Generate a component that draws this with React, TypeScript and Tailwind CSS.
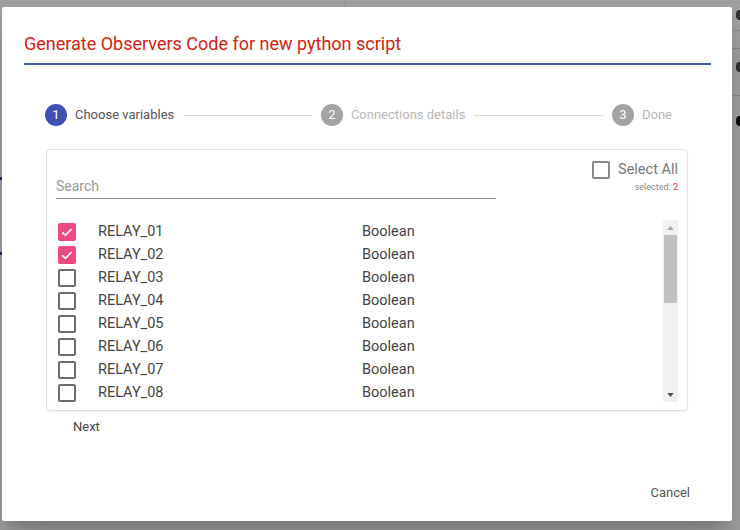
import React from "react";

const relays = Array.from({ length: 8 }, (_, i) => ({
  name: `RELAY_${String(i + 1).padStart(2, "0")}`,
  type: "Boolean",
  checked: i < 2,
}));

function Box({ checked }: { checked: boolean }) {
  if (checked) {
    return (
      <span className="flex h-[18px] w-[18px] shrink-0 items-center justify-center rounded-[2px] bg-[#ee4a80]">
        <svg viewBox="0 0 24 24" className="h-[16px] w-[16px]" fill="none">
          <path d="M5 12.5l4.5 4.5L19 7.5" stroke="#fff" strokeWidth="2.4" />
        </svg>
      </span>
    );
  }
  return <span className="h-[18px] w-[18px] shrink-0 rounded-[2px] border-2 border-[#6e6e6e]" />;
}

function Step({ n, label, active }: { n: number; label: string; active?: boolean }) {
  return (
    <div className="flex items-center gap-[8px]">
      <span
        className={`flex h-[22px] w-[22px] items-center justify-center rounded-full text-[13px] text-white ${
          active ? "bg-[#3f4fb3]" : "bg-[#a3a3a3]"
        }`}
      >
        {n}
      </span>
      <span className={`text-[13px] ${active ? "text-[#555]" : "text-[#b8b8b8]"}`}>{label}</span>
    </div>
  );
}

export default function App() {
  return (
    <div
      className="relative h-[530px] w-[740px] overflow-hidden bg-[#a1a1a1]"
      style={{ fontFamily: "Roboto, 'Liberation Sans', sans-serif" }}
    >
      {/* page behind the overlay */}
      <div className="absolute left-[345px] top-0 h-[7px] w-px bg-[#8e8e8e]" />
      <div className="absolute left-0 top-[2px] h-px w-[740px] bg-[#999]" />
      <div className="absolute left-[733px] top-[30px] h-px w-[7px] bg-[#8a8a8a]" />
      <div className="absolute left-[733px] top-[48px] h-px w-[7px] bg-[#8a8a8a]" />
      <div className="absolute left-[733px] top-[95px] h-px w-[7px] bg-[#8a8a8a]" />
      <div className="absolute left-[736px] top-[10px] h-[10px] w-[4px] rounded-l-full bg-[#333]" />
      <div className="absolute left-[736px] top-[62px] h-[10px] w-[4px] rounded-l-full bg-[#333]" />
      <div className="absolute left-[736px] top-[116px] h-[10px] w-[4px] rounded-l-full bg-[#111]" />
      <div className="absolute left-0 top-[177px] h-[3px] w-[2px] bg-[#1a2a7a]" />
      <div className="absolute left-0 top-[252px] h-[3px] w-[2px] bg-[#1a2a7a]" />

      {/* dialog */}
      <div className="absolute left-[2px] top-[7px] flex h-[514px] w-[730px] flex-col rounded-[2px] bg-white shadow-[0_11px_15px_-7px_rgba(0,0,0,0.2),0_24px_38px_3px_rgba(0,0,0,0.14)]">
        <div className="mx-[22px] mr-[21px] border-b-2 border-[#3d5aa8] pb-[8px] pt-[25px]">
          <h2 className="text-[18px] leading-[23px] text-[#d2220f]">
            Generate Observers Code for new python script
          </h2>
        </div>

        <div className="ml-[43px] mt-[39px] flex w-[627px] items-center">
          <Step n={1} label="Choose variables" active />
          <div className="mx-[9px] h-px flex-1 bg-[#dcdcdc]" />
          <Step n={2} label="Connections details" />
          <div className="mx-[9px] h-px flex-1 bg-[#dcdcdc]" />
          <Step n={3} label="Done" />
        </div>

        <div className="ml-[44px] mt-[23px] w-[642px] rounded-[4px] border border-[#e2e2e2] px-[9px] pb-[8px] pt-[11px] shadow-[0_1px_2px_rgba(0,0,0,0.06)]">
          <div className="flex h-[59px] items-start justify-between">
            <div className="w-[440px] pt-[14px]">
              <div className="flex h-[24px] items-center border-b border-[#8c8c8c] text-[14px] text-[#9a9a9a]">
                Search
              </div>
            </div>
            <div className="flex flex-col items-end">
              <div className="flex h-[18px] items-center gap-[8px]">
                <span className="h-[18px] w-[18px] rounded-[2px] border-2 border-[#8a8a8a]" />
                <span className="text-[14.5px] text-[#777]">Select All</span>
              </div>
              <div className="mt-[2px] text-[9px] leading-[12px] text-[#888]">
                selected: <span className="text-[#e53935]">2</span>
              </div>
            </div>
          </div>

          <div className="flex h-[182px]">
            <div className="flex-1">
              {relays.map((r) => (
                <div key={r.name} className="flex h-[23px] items-center text-[14.5px] text-[#444]">
                  <span className="ml-[2px] mr-[22px] flex">
                    <Box checked={r.checked} />
                  </span>
                  <span className="w-[264px]">{r.name}</span>
                  <span>{r.type}</span>
                </div>
              ))}
            </div>
            <div className="flex w-[15px] flex-col bg-[#f1f1f1]">
              <div className="flex h-[15px] items-center justify-center">
                <svg viewBox="0 0 8 5" className="h-[4px] w-[7px]">
                  <path d="M0 5L4 0L8 5Z" fill="#a3a3a3" />
                </svg>
              </div>
              <div className="mx-[1px] h-[68px] bg-[#c1c1c1]" />
              <div className="flex-1" />
              <div className="flex h-[15px] items-center justify-center">
                <svg viewBox="0 0 8 5" className="h-[4px] w-[7px]">
                  <path d="M0 0L4 5L8 0Z" fill="#505050" />
                </svg>
              </div>
            </div>
          </div>
        </div>

        <div className="ml-[71px] mt-[6px] text-[13px] text-[#444]">Next</div>

        <div className="mt-auto flex justify-end pb-[19px] pr-[42px]">
          <span className="text-[13px] text-[#555]">Cancel</span>
        </div>
      </div>
    </div>
  );
}
